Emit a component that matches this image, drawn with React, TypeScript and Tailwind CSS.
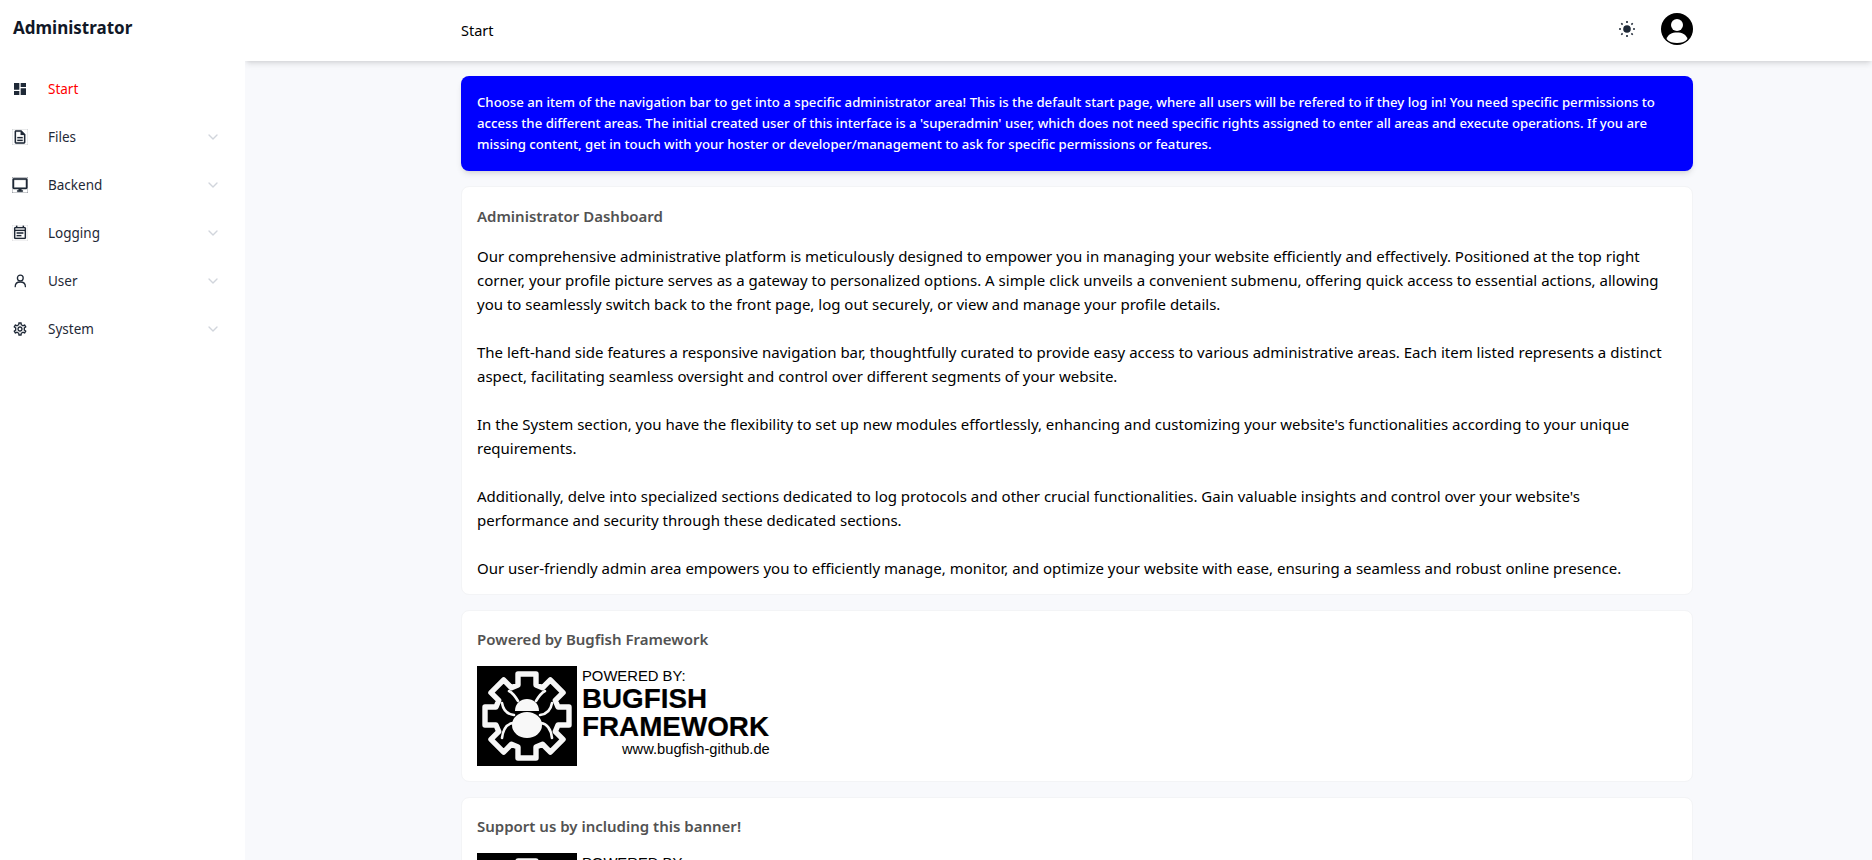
import React from "react";
import { ChevronDown } from "lucide-react";
import {
  MdDashboard,
  MdOutlineDescription,
  MdOutlineDesktopWindows,
  MdOutlineEventNote,
  MdOutlineSettings,
} from "react-icons/md";

const font = { fontFamily: '"Noto Sans", "Open Sans", sans-serif' };

function gearPath() {
  const cx = 50;
  const cy = 50;
  const local: [number, number][] = [
    [-9, -31],
    [-9, -42],
    [9, -42],
    [9, -31],
  ];
  const pts: string[] = [];
  for (let i = 0; i < 8; i++) {
    const a = (i * Math.PI) / 4;
    for (const [x, y] of local) {
      const px = cx + x * Math.cos(a) - y * Math.sin(a);
      const py = cy + x * Math.sin(a) + y * Math.cos(a);
      pts.push(`${px.toFixed(2)} ${py.toFixed(2)}`);
    }
  }
  return `M${pts.join("L")}Z`;
}

function BugLogo() {
  return (
    <svg width="297" height="100" viewBox="0 0 297 100" className="block">
      <rect x="0" y="0" width="100" height="100" fill="#000" />
      <path d={gearPath()} fill="none" stroke="#f6f6f6" strokeWidth="5.4" strokeLinejoin="round" />
      <g fill="#f8f8f8">
        <path d="M38 45 C38 29 62 29 62 45 Z" />
        <ellipse cx="50" cy="59" rx="15" ry="13" />
      </g>
      <g fill="none" stroke="#f8f8f8" strokeWidth="2.6" strokeLinecap="round">
        <path d="M41 35 C38 30 36 27 32 25" />
        <path d="M59 35 C62 30 64 27 68 25" />
        <path d="M37 49 C29 48 26 43 25 37" />
        <path d="M63 49 C71 48 74 43 75 37" />
        <path d="M36 57 C29 58 26 64 25 72" />
        <path d="M64 57 C71 58 74 64 75 72" />
      </g>
      <g style={{ fontFamily: '"Liberation Sans", Arial, sans-serif' }} fill="#000">
        <text x="105" y="15" fontSize="14.8">POWERED BY:</text>
        <text x="105" y="42" fontSize="28.5" fontWeight="700" stroke="#000" strokeWidth="0.2" textLength="125" lengthAdjust="spacingAndGlyphs">BUGFISH</text>
        <text x="105" y="70" fontSize="28.5" fontWeight="700" stroke="#000" strokeWidth="0.2" textLength="187" lengthAdjust="spacingAndGlyphs">FRAMEWORK</text>
        <text x="145" y="88" fontSize="14.7">www.bugfish-github.de</text>
      </g>
    </svg>
  );
}

function SunIcon() {
  return (
    <svg width="16" height="16" viewBox="0 0 16 16" fill="#1f2937" stroke="#1f2937">
      <circle cx="8" cy="8" r="3.8" stroke="none" />
      <g strokeWidth="1.6">
        <path d="M8 0v2M8 14v2M0 8h2M14 8h2M2.300 2.300l1.300 1.300M12.400 12.400l1.300 1.300M2.300 13.700l1.300-1.300M12.400 3.600l1.300-1.300" />
      </g>
    </svg>
  );
}
function AvatarIcon() {
  return (
    <svg width="32" height="32" viewBox="0 0 32 32">
      <circle cx="16" cy="16" r="16" fill="#000" />
      <circle cx="16" cy="12" r="6" fill="#fff" />
      <path d="M5.500 26 C7 21 11 19.500 16 19.500 S25 21 26.500 26 C24 29 20 30 16 30 S8 29 5.500 26z" fill="#fff" />
    </svg>
  );
}
function UserIcon() {
  return (
    <svg width="16" height="16" viewBox="0 0 16 16" fill="none" stroke="currentColor" strokeWidth="1.3" strokeLinecap="round">
      <circle cx="8.300" cy="5" r="2.900" />
      <path d="M3.200 13.700c0-2.900 2.200-4.700 5.100-4.700s5.100 1.800 5.100 4.700" />
    </svg>
  );
}

const nav: { label: string; icon: React.ReactNode; active?: boolean }[] = [
  { label: "Start", icon: <MdDashboard size={16} />, active: true },
  { label: "Files", icon: <MdOutlineDescription size={16} stroke="currentColor" strokeWidth={0.3} /> },
  { label: "Backend", icon: <MdOutlineDesktopWindows size={16} stroke="currentColor" strokeWidth={0.7} /> },
  { label: "Logging", icon: <MdOutlineEventNote size={16} stroke="currentColor" strokeWidth={0.2} /> },
  { label: "User", icon: <UserIcon /> },
  { label: "System", icon: <MdOutlineSettings size={16} /> },
];

function Card({ title, children, className }: { title: string; children: React.ReactNode; className?: string }) {
  return (
    <div className={`rounded-lg border border-gray-100 bg-white px-[15px] ${className ?? ""}`}>
      <h3 className="text-[15px] font-semibold leading-6 text-[#525252]">{title}</h3>
      {children}
    </div>
  );
}

const paragraphs = [
  "Our comprehensive administrative platform is meticulously designed to empower you in managing your website efficiently and effectively. Positioned at the top right corner, your profile picture serves as a gateway to personalized options. A simple click unveils a convenient submenu, offering quick access to essential actions, allowing you to seamlessly switch back to the front page, log out securely, or view and manage your profile details.",
  "The left-hand side features a responsive navigation bar, thoughtfully curated to provide easy access to various administrative areas. Each item listed represents a distinct aspect, facilitating seamless oversight and control over different segments of your website.",
  "In the System section, you have the flexibility to set up new modules effortlessly, enhancing and customizing your website's functionalities according to your unique requirements.",
  "Additionally, delve into specialized sections dedicated to log protocols and other crucial functionalities. Gain valuable insights and control over your website's performance and security through these dedicated sections.",
  "Our user-friendly admin area empowers you to efficiently manage, monitor, and optimize your website with ease, ensuring a seamless and robust online presence.",
];

export default function App() {
  return (
    <div className="flex h-[860px] overflow-hidden bg-[#f8f9fc] text-black" style={font}>
      <aside className="relative z-20 w-[245px] shrink-0 bg-white">
        <div className="pl-[13px] pt-[15px] text-[17px] font-bold leading-[26px] text-[#111827]">Administrator</div>
        <nav className="mt-[34px] flex flex-col gap-[20px]">
          {nav.map((n) => (
            <div key={n.label} className="flex h-[28px] items-center pl-[12px] pr-[24px]">
              <span className="flex w-[36px] items-center text-[#1f2937]">{n.icon}</span>
              <span className={`flex-1 text-[13.5px] ${n.active ? "text-[#ff0000]" : "text-[#1f2937]"}`}>{n.label}</span>
              {!n.active && <ChevronDown size={16} className="text-gray-300" />}
            </div>
          ))}
        </nav>
      </aside>
      <div className="flex min-w-0 flex-1 flex-col">
        <header className="relative z-10 flex h-[61px] shrink-0 items-center justify-between bg-white pl-[216px] pr-[179px] shadow-md">
          <span className="text-[14.5px] text-black">Start</span>
          <div className="-mt-[3px] flex items-center gap-[26px]">
            <SunIcon />
            <AvatarIcon />
          </div>
        </header>
        <main className="flex flex-col gap-[15px] pl-[216px] pr-[179px] pt-[15px]">
          <div className="rounded-lg bg-[#0000ff] p-4 text-[13.2px] font-medium leading-[21px] text-white shadow-md">
            Choose an item of the navigation bar to get into a specific administrator area! This is the default start page, where all users will be refered to if they log in! You need specific permissions to access the different areas. The initial created user of this interface is a 'superadmin' user, which does not need specific rights assigned to enter all areas and execute operations. If you are missing content, get in touch with your hoster or developer/management to ask for specific permissions or features.
          </div>
          <Card title="Administrator Dashboard" className="pb-[14px] pt-[17px]">
            <div className="mt-[16px] flex flex-col gap-6 pr-[6px] text-[15px] leading-6 text-black">
              {paragraphs.map((p, i) => (
                <p key={i}>{p}</p>
              ))}
            </div>
          </Card>
          <Card title="Powered by Bugfish Framework" className="pb-[15px] pt-[16px]">
            <div className="mt-[15px]">
              <BugLogo />
            </div>
          </Card>
          <Card title="Support us by including this banner!" className="pb-[16px] pt-[16px]">
            <div className="mt-[15px]">
              <BugLogo />
            </div>
          </Card>
        </main>
      </div>
    </div>
  );
}
